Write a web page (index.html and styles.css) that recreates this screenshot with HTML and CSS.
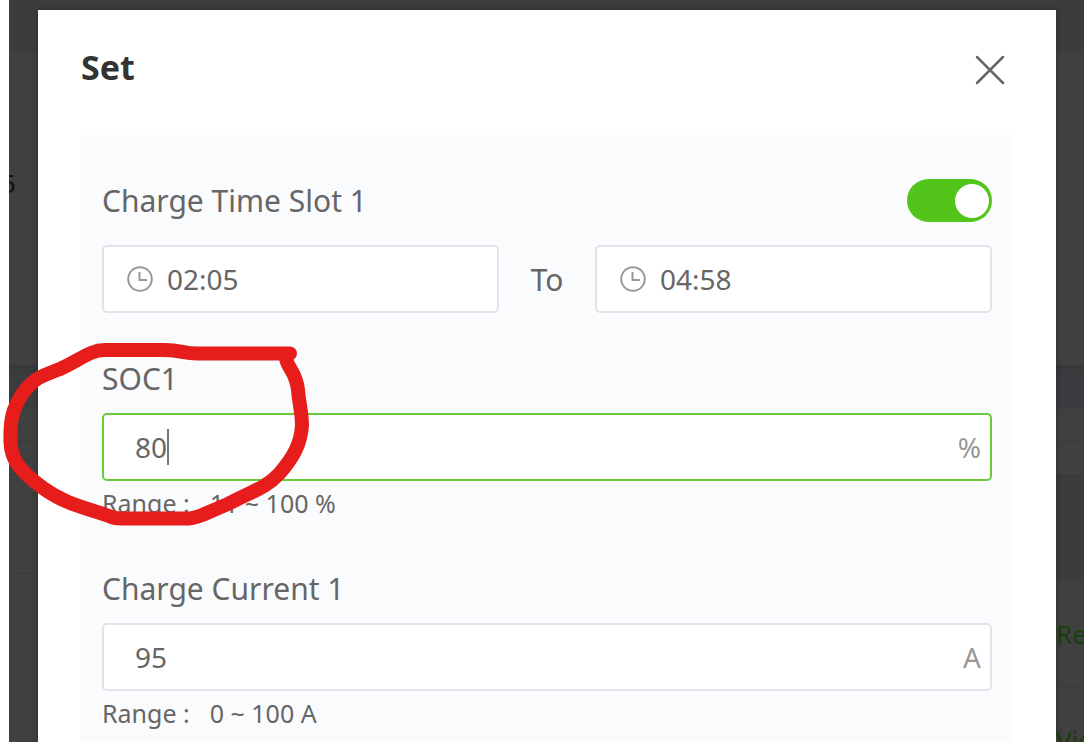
FILE: index.html
```html
<!DOCTYPE html>
<html lang="en">
<head>
<meta charset="utf-8">
<meta name="viewport" content="width=device-width, initial-scale=1">
<title>Set</title>
<link rel="stylesheet" href="styles.css">
</head>
<body>
<div class="screen">
  <div class="page" aria-hidden="true">
    <div class="band band-top"></div>
    <div class="card"><span class="card-value">5</span></div>
    <div class="band"></div>
    <div class="tables">
      <div class="list">
        <div class="row row-short"></div>
        <div class="row row-short"></div>
        <div class="row row-tall"></div>
        <div class="row row-short"></div>
      </div>
      <div class="list list-actions">
        <div class="row row-short"></div>
        <div class="row row-short"></div>
        <div class="row row-action row-head"></div>
        <div class="row row-action"><span class="action">Re</span></div>
        <div class="row row-action"><span class="action">View</span></div>
      </div>
    </div>
  </div>

  <div class="dialog" role="dialog" aria-labelledby="dialog-title">
    <header class="dialog-head">
      <h1 class="title" id="dialog-title">Set</h1>
      <button class="close" type="button" aria-label="Close">
        <svg width="30" height="30" viewBox="0 0 30 30"><path d="M2 2 28 28M28 2 2 28"/></svg>
      </button>
    </header>
    <form class="panel">
      <div class="slot-head">
        <label class="label" for="slot1">Charge Time Slot 1</label>
        <input class="switch" id="slot1" type="checkbox" role="switch" checked>
      </div>
      <div class="times">
        <div class="field field-time">
          <svg class="clock" viewBox="0 0 26 26"><circle cx="13" cy="13" r="11.8"/><path d="M12.500 6v8H20"/></svg>
          <input class="input" type="text" value="02:05" aria-label="Start time">
        </div>
        <span class="to">To</span>
        <div class="field field-time">
          <svg class="clock" viewBox="0 0 26 26"><circle cx="13" cy="13" r="11.8"/><path d="M12.500 6v8H20"/></svg>
          <input class="input" type="text" value="04:58" aria-label="End time">
        </div>
      </div>

      <div class="group">
        <label class="label" for="soc1">SOC1</label>
        <div class="field field-active">
          <input class="input" id="soc1" type="text" value="80">
          <span class="caret"></span>
          <span class="unit">%</span>
        </div>
        <p class="hint"><span>Range :</span><span>11 ~ 100 %</span></p>
      </div>

      <div class="group">
        <label class="label" for="current1">Charge Current 1</label>
        <div class="field">
          <input class="input" id="current1" type="text" value="95">
          <span class="unit">A</span>
        </div>
        <p class="hint"><span>Range :</span><span>0 ~ 100 A</span></p>
      </div>
    </form>
  </div>

  <svg class="marker" width="320" height="200" viewBox="0 335 320 200" aria-hidden="true">
    <path d="M290 353.500H197C184 353.500 180 350 165 350H105C90 350 80 360 60 369C45 375 34 377 23 393C12 409 10 420 10.500 442C11 460 20 471 43 488C65 504 83 507 109 516C113 518 116 518.500 121 518.500H189C200 518 212 510 228 504C250 492 266 488 279 474C293 458 301 444 302 425C302 410 299 405 298 390C296 371 287 368 286 358"/>
  </svg>
</div>
</body>
</html>
```

FILE: styles.css
```css
* { box-sizing: border-box; }

body {
  margin: 0;
  background: #fff;
  color: #666;
  font-family: "Noto Sans", "Open Sans", sans-serif;
}

.screen {
  position: relative;
  display: grid;
  grid-template: minmax(0, 1fr) / minmax(0, 1fr);
  height: 100vh;
  padding-left: 9px;
  overflow: hidden;
}

.page, .dialog { grid-area: 1 / 1; }

/* Dimmed page behind the dialog */
.page {
  display: flex;
  flex-direction: column;
  background: #404040;
  overflow: hidden;
}
.band {
  flex: none;
  height: 44px;
  background: linear-gradient(#37383a, #3b3c3f 12px);
}
.band-top { height: 51px; background: #3b3c3e; }
.card {
  flex: none;
  height: 314px;
  padding-top: 114px;
}
.card-value {
  display: block;
  margin-left: -8px;
  color: #111;
  font-size: 26px;
  line-height: 36px;
}
.tables { display: flex; flex: 1; }
.list { flex: 1; }
.row { border-bottom: 1px solid #3a3a3a; }
.row-short { height: 33px; }
.row-tall { height: 66px; }
.row-action {
  display: flex;
  align-items: center;
  justify-content: flex-end;
  height: 106px;
}
.row-head { background: #3c3c3c; }
.action {
  width: 28px;
  color: #183f08;
  font-size: 26px;
  white-space: nowrap;
}

/* Dialog */
.dialog {
  margin: 10px 28px 0 29px;
  padding: 0 43px;
  background: #fff;
  box-shadow: 0 0 6px rgba(0, 0, 0, 0.3);
}
.dialog-head {
  display: flex;
  align-items: center;
  justify-content: space-between;
  height: 125px;
  padding: 0 8px 6px 0;
}
.title {
  margin: 0;
  padding-bottom: 5px;
  color: #333;
  font-size: 34px;
  line-height: 48px;
}
.close {
  display: flex;
  padding: 0;
  border: 0;
  background: none;
}
.close path { fill: none; stroke: #666; stroke-width: 2.5; stroke-linecap: round; }

.panel {
  height: 100%;
  padding: 44px 21px 0;
  background: #fafbfd;
}
.slot-head {
  display: flex;
  align-items: center;
  justify-content: space-between;
  height: 43px;
}
.label {
  display: block;
  font-size: 30px;
  line-height: 44px;
}
.switch {
  appearance: none;
  display: flex;
  align-items: center;
  justify-content: flex-end;
  width: 85px;
  height: 43px;
  margin: 0;
  padding: 3px;
  border-radius: 22px;
  background: #52c41a;
}
.switch::before {
  content: "";
  width: 34px;
  height: 34px;
  border-radius: 50%;
  background: #fff;
}
.times {
  display: flex;
  align-items: center;
  margin-top: 23px;
}
.to {
  flex: none;
  width: 96px;
  font-size: 30px;
  text-align: center;
}
.field {
  position: relative;
  display: flex;
  flex: 1;
  align-items: center;
  min-width: 0;
  height: 68px;
  padding: 0 9px 0 31px;
  border: 2px solid #e0e3e9;
  border-radius: 5px;
  background: #fff;
}
.field-time { gap: 14px; padding: 0 23px; }
.field-active { border-color: #6acb3a; }
.input {
  flex: 1;
  min-width: 0;
  padding: 0;
  border: 0;
  outline: 0;
  background: none;
  color: #666;
  font: inherit;
  font-size: 28px;
}
.clock {
  flex: none;
  width: 26px;
  height: 26px;
  fill: none;
  stroke: #999;
  stroke-width: 2;
}
.caret {
  position: absolute;
  top: 14px;
  left: 63px;
  width: 2px;
  height: 36px;
  background: #777;
}
.unit { color: #999; font-size: 28px; }
.group { padding-top: 44px; }
.group .label { margin-bottom: 12px; }
.group + .group { padding-top: 42px; }
.hint {
  display: flex;
  gap: 20px;
  height: 44px;
  margin: 0;
  font-size: 25px;
  line-height: 44px;
}

/* Hand-drawn circle over the SOC1 field */
.marker {
  position: absolute;
  top: 335px;
  left: 0;
  pointer-events: none;
}
.marker path {
  fill: none;
  stroke: #e71d1c;
  stroke-width: 14;
  stroke-linecap: round;
  stroke-linejoin: round;
}
```
